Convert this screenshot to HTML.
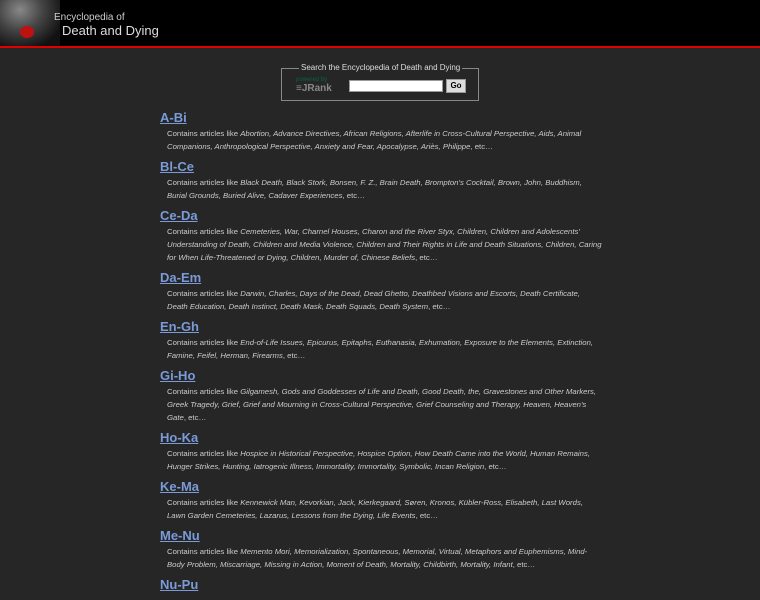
<!DOCTYPE html>
<html><head><style>
body{margin:0;background:#262626;font-family:"Liberation Sans",Arial,sans-serif;width:760px;height:600px;overflow:hidden}
.hdr{height:46px;background:#000;position:relative;border-bottom:2px solid #e00000}
.photo{position:absolute;left:0;top:0;width:60px;height:46px;background:radial-gradient(ellipse at 20px 10px,#888 0,#444 40%,#111 80%)}
.rose{position:absolute;left:20px;top:26px;width:14px;height:12px;background:#c01010;border-radius:50%}
.t1{position:absolute;left:54px;top:12px;color:#ccc;font-size:10px}
.t2{position:absolute;left:62px;top:23px;color:#ddd;font-size:13px}
.search{position:absolute;left:281px;top:68px;width:196px;height:31px;border:1px solid #888;}
.search .lg{position:absolute;top:-6px;left:17px;background:#262626;color:#ddd;font-size:8px;padding:0 2px;line-height:10px}
.jr{position:absolute;left:14px;top:14px;color:#888;font-weight:bold;font-size:10px}
.pw{position:absolute;left:14px;top:8px;color:#064;font-size:6px}
.inp{position:absolute;left:67px;top:11px;width:92px;height:10px;background:#fff;border:1px solid #999}
.go{position:absolute;left:164px;top:10px;width:18px;height:12px;background:#ddd;border:1px solid #999;font-size:8px;font-weight:bold;text-align:center;line-height:12px}
.main{position:absolute;left:160px;top:110px;width:442px}
h2{margin:0;height:16px;line-height:16px;font-size:13px;font-weight:bold;color:#7a9ad8;text-decoration:underline}
p{margin:1px 0 6px 7px;font-size:7.75px;line-height:13px;color:#ccc}
i{color:#ccc}
</style></head><body>
<div class="hdr"><div class="photo"></div><div class="rose"></div><div class="t1">Encyclopedia of</div><div class="t2">Death and Dying</div></div>
<div class="search"><span class="lg">Search the Encyclopedia of Death and Dying</span><span class="pw">powered by</span><span class="jr">≡JRank</span><div class="inp"></div><div class="go">Go</div></div>
<div class="main">
<h2>A-Bi</h2><p>Contains articles like <i>Abortion, Advance Directives, African Religions, Afterlife in Cross-Cultural Perspective, Aids, Animal Companions, Anthropological Perspective, Anxiety and Fear, Apocalypse, Ariès, Philippe</i>, etc…</p>
<h2>Bl-Ce</h2><p>Contains articles like <i>Black Death, Black Stork, Bonsen, F. Z., Brain Death, Brompton's Cocktail, Brown, John, Buddhism, Burial Grounds, Buried Alive, Cadaver Experiences</i>, etc…</p>
<h2>Ce-Da</h2><p>Contains articles like <i>Cemeteries, War, Charnel Houses, Charon and the River Styx, Children, Children and Adolescents' Understanding of Death, Children and Media Violence, Children and Their Rights in Life and Death Situations, Children, Caring for When Life-Threatened or Dying, Children, Murder of, Chinese Beliefs</i>, etc…</p>
<h2>Da-Em</h2><p>Contains articles like <i>Darwin, Charles, Days of the Dead, Dead Ghetto, Deathbed Visions and Escorts, Death Certificate, Death Education, Death Instinct, Death Mask, Death Squads, Death System</i>, etc…</p>
<h2>En-Gh</h2><p>Contains articles like <i>End-of-Life Issues, Epicurus, Epitaphs, Euthanasia, Exhumation, Exposure to the Elements, Extinction, Famine, Feifel, Herman, Firearms</i>, etc…</p>
<h2>Gi-Ho</h2><p>Contains articles like <i>Gilgamesh, Gods and Goddesses of Life and Death, Good Death, the, Gravestones and Other Markers, Greek Tragedy, Grief, Grief and Mourning in Cross-Cultural Perspective, Grief Counseling and Therapy, Heaven, Heaven's Gate</i>, etc…</p>
<h2>Ho-Ka</h2><p>Contains articles like <i>Hospice in Historical Perspective, Hospice Option, How Death Came into the World, Human Remains, Hunger Strikes, Hunting, Iatrogenic Illness, Immortality, Immortality, Symbolic, Incan Religion</i>, etc…</p>
<h2>Ke-Ma</h2><p>Contains articles like <i>Kennewick Man, Kevorkian, Jack, Kierkegaard, Søren, Kronos, Kübler-Ross, Elisabeth, Last Words, Lawn Garden Cemeteries, Lazarus, Lessons from the Dying, Life Events</i>, etc…</p>
<h2>Me-Nu</h2><p>Contains articles like <i>Memento Mori, Memorialization, Spontaneous, Memorial, Virtual, Metaphors and Euphemisms, Mind-Body Problem, Miscarriage, Missing in Action, Moment of Death, Mortality, Childbirth, Mortality, Infant</i>, etc…</p>
<h2>Nu-Pu</h2>
</div>
</body></html>
